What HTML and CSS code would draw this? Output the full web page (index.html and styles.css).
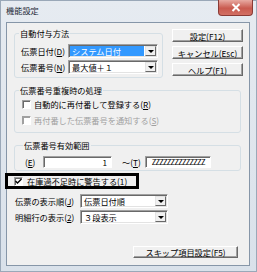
FILE: index.html
```html
<!DOCTYPE html>
<html lang="ja">
<head>
  <meta charset="UTF-8" />
  <meta name="viewport" content="width=device-width, initial-scale=1.0" />
  <title>機能設定</title>
  <link rel="stylesheet" href="styles.css">
</head>
<body>
  <div class="window">
    <div class="titlebar">
      <span class="title">機能設定</span>
      <span class="close">
        <svg width="10" height="9" viewBox="0 0 10 9"><path d="M1.5 1 L8.5 8 M8.5 1 L1.5 8" stroke="#fff" stroke-width="2" /></svg>
      </span>
    </div>

    <div class="client">
      <div class="top">
        <fieldset class="group group-auto">
          <legend>自動付与方法</legend>
          <div class="field">
            <label>伝票日付(<u>D</u>)</label>
            <div class="combo combo-short selected"><span class="value">システム日付</span><span class="arrow"></span></div>
          </div>
          <div class="field">
            <label>伝票番号(<u>N</u>)</label>
            <div class="combo combo-short"><span class="value">最大値＋１</span><span class="arrow"></span></div>
          </div>
        </fieldset>

        <div class="buttons">
          <button class="btn">設定(F12)</button>
          <button class="btn">キャンセル(Esc)</button>
          <button class="btn">ヘルプ(F1)</button>
        </div>
      </div>

      <fieldset class="group group-dup">
        <legend>伝票番号重複時の処理</legend>
        <div class="check-row"><span class="box"></span>自動的に再付番して登録する(<u>R</u>)</div>
        <div class="check-row disabled"><span class="box"></span>再付番した伝票番号を通知する(<u>S</u>)</div>
      </fieldset>

      <fieldset class="group group-range">
        <legend>伝票番号有効範囲</legend>
        <div class="range">
          <label class="from">(<u>E</u>)</label>
          <span class="text text-from">1</span>
          <label class="to">～(<u>T</u>)</label>
          <span class="text text-to">ZZZZZZZZZZZZZZ</span>
        </div>
      </fieldset>

      <div class="check-row marked">
        <span class="box"><svg width="7" height="7" viewBox="0 0 7 7"><path d="M0.5 3 L2.5 5 L6.5 1" fill="none" stroke="#000" stroke-width="1.4" /></svg></span>在庫過不足時に警告する(<u>1</u>)
      </div>

      <div class="field plain">
        <label>伝票の表示順(<u>J</u>)</label>
        <div class="combo combo-long"><span class="value">伝票日付順</span><span class="arrow"></span></div>
      </div>
      <div class="field plain">
        <label>明細行の表示(<u>2</u>)</label>
        <div class="combo combo-long"><span class="value">３段表示</span><span class="arrow"></span></div>
      </div>

      <div class="footer">
        <button class="btn btn-skip">スキップ項目設定(F5)</button>
      </div>
    </div>
  </div>
</body>
</html>
```

FILE: styles.css
```css
* {
  box-sizing: border-box;
}

body {
  margin: 0;
  font-family: "Noto Sans CJK JP", "Noto Sans", sans-serif;
  font-size: 8.2px;
  color: #000;
  background: #fff;
}

u {
  text-decoration: underline;
  text-underline-offset: 1px;
}

.window {
  width: 257px;
  height: 272px;
  background: linear-gradient(#e6ebf1, #d9e1ea);
  border: 1px solid #9aa8b8;
  display: flex;
  flex-direction: column;
}

.titlebar {
  height: 21px;
  display: flex;
  align-items: flex-start;
  flex-shrink: 0;
}

.title {
  margin: 4px 0 0 5px;
  line-height: 11px;
  color: #1e2a38;
}

.close {
  margin-left: auto;
  margin-right: 3px;
  width: 35px;
  height: 16px;
  margin-top: -1px;
  border: 1px solid #8a3b36;
  border-top: none;
  border-radius: 0 0 4px 4px;
  background: linear-gradient(#e8aaa2, #c95a4f 55%, #d27064);
  display: flex;
  align-items: center;
  justify-content: center;
}

.client {
  margin: 0 6px 5px 5px;
  flex: 1;
  background: #f0f0f0;
  border: 1px solid #8696a8;
  padding: 5px 6px 0 7px;
}

.top {
  display: flex;
  align-items: flex-start;
  gap: 9px;
}

/* group boxes */
.group {
  margin: 0;
  border: 1px solid #d5dfe5;
  border-radius: 3px;
  min-width: 0;
}

.group legend {
  padding: 0 1px;
  margin-left: -2px;
  line-height: 10px;
  height: 10px;
}

.group-auto {
  width: 149px;
  padding: 6px 4px 3px 6px;
}

.group-dup {
  width: 227px;
  margin-top: 7px;
  padding: 2px 4px 5px 6px;
}

.group-range {
  width: 227px;
  margin-top: 7px;
  padding: 5px 4px 2px 10px;
}

/* label + combo rows */
.field {
  display: flex;
  align-items: center;
  height: 14px;
}

.field + .field {
  margin-top: 2px;
}

.field label {
  width: 47px;
  flex-shrink: 0;
  white-space: nowrap;
}

.field.plain {
  padding-left: 1px;
}

.field.plain label {
  width: 65px;
}

.marked + .field.plain {
  margin-top: 5px;
}

.combo {
  height: 14px;
  display: flex;
  align-items: stretch;
  background: #fff;
  border-top: 1px solid #a0a0a0;
  border-left: 1px solid #a0a0a0;
  border-right: 1px solid #fff;
  border-bottom: 1px solid #fff;
  box-shadow: inset 1px 1px 0 #696969, inset -1px -1px 0 #e3e3e3;
  padding: 1px;
}

.combo-short {
  width: 90px;
}

.combo-long {
  width: 88px;
}

.combo .value {
  flex: 1;
  padding-left: 2px;
  line-height: 10px;
  white-space: nowrap;
  overflow: hidden;
}

.combo.selected .value {
  background: #3399ff;
  color: #fff;
}

.combo .arrow {
  width: 11px;
  margin-left: 1px;
  background: #f0f0f0;
  border-top: 1px solid #e3e3e3;
  border-left: 1px solid #e3e3e3;
  border-right: 1px solid #696969;
  border-bottom: 1px solid #696969;
  display: flex;
  align-items: center;
  justify-content: center;
}

.combo .arrow::after {
  content: "";
  border-left: 3px solid transparent;
  border-right: 3px solid transparent;
  border-top: 3px solid #000;
}

/* buttons */
.buttons {
  margin-top: 1px;
  display: flex;
  flex-direction: column;
  gap: 4px;
}

.btn {
  width: 71px;
  height: 13px;
  padding: 0;
  font: inherit;
  line-height: 10px;
  color: #000;
  background: #f0f0f0;
  border-top: 1px solid #fff;
  border-left: 1px solid #fff;
  border-right: 1px solid #696969;
  border-bottom: 1px solid #696969;
  box-shadow: inset -1px -1px 0 #a0a0a0;
}

.footer {
  display: flex;
  justify-content: flex-end;
  margin-top: 22px;
  padding-right: 5px;
}

.btn-skip {
  width: 105px;
  height: 12px;
}

/* checkboxes */
.check-row {
  display: flex;
  align-items: center;
  height: 14px;
  padding-left: 1px;
  white-space: nowrap;
}

.check-row + .check-row {
  margin-top: 2px;
}

.check-row .box {
  width: 9px;
  height: 9px;
  margin-right: 3px;
  background: #fff;
  border-top: 1px solid #a0a0a0;
  border-left: 1px solid #a0a0a0;
  border-right: 1px solid #fff;
  border-bottom: 1px solid #fff;
  box-shadow: inset 1px 1px 0 #696969;
  display: flex;
  align-items: center;
  justify-content: center;
}

.check-row.disabled {
  color: #a0a0a0;
}

.check-row.disabled .box {
  box-shadow: inset 1px 1px 0 #a0a0a0;
}

.check-row.marked {
  width: 134px;
  height: 16px;
  margin: 2px 0 0 -9px;
  padding-left: 6px;
  border: 3px solid #000;
}

.check-row.marked .box {
  margin-right: 4px;
}

/* range inputs */
.range {
  display: flex;
  align-items: center;
  height: 13px;
}

.range .from {
  width: 18px;
}

.range .to {
  margin: 0 4px 0 10px;
}

.text {
  height: 12px;
  background: #fff;
  border-top: 1px solid #a0a0a0;
  border-left: 1px solid #a0a0a0;
  border-right: 1px solid #fff;
  border-bottom: 1px solid #fff;
  box-shadow: inset 1px 1px 0 #696969;
  line-height: 10px;
  padding: 0 4px;
  white-space: nowrap;
  overflow: hidden;
}

.text-from {
  width: 69px;
  text-align: right;
}

.text-to {
  width: 66px;
  font-size: 7.5px;
  letter-spacing: -0.6px;
  padding-left: 6px;
}
```
